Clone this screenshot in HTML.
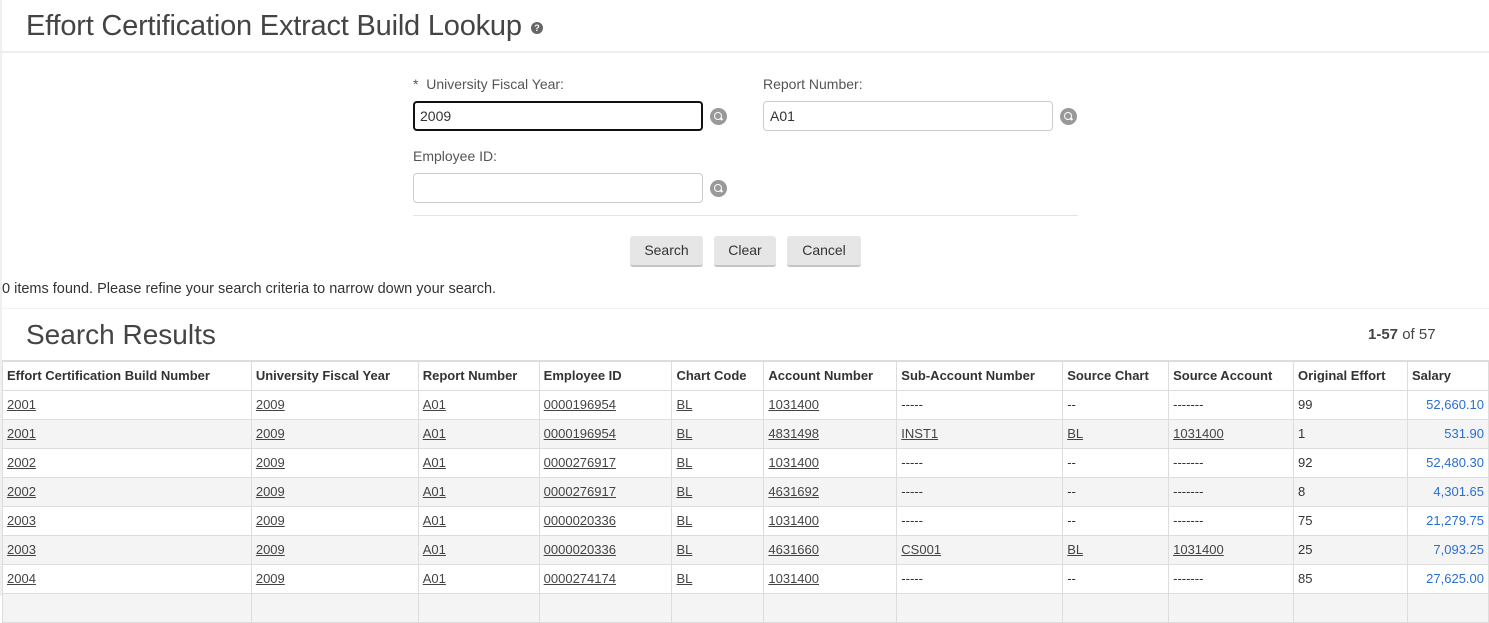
<!DOCTYPE html>
<html><head><meta charset="utf-8"><style>
*{box-sizing:border-box;margin:0;padding:0}
body{width:1489px;height:596px;overflow:hidden;background:#fff;font-family:"Liberation Sans",sans-serif;color:#333;position:relative}
.a{position:absolute}
h1{position:absolute;left:26px;top:10px;font-size:29px;font-weight:300;color:#444;letter-spacing:-0.2px}
.help{position:absolute;left:531px;top:22px;width:12px;height:12px;border-radius:50%;background:#666;color:#fff;font-size:9px;font-weight:bold;text-align:center;line-height:12px}
.lbl{position:absolute;font-size:14px;color:#555}
.inp{position:absolute;height:30px;width:290px;border:1px solid #ccc;border-radius:4px;font-size:14px;padding:6px 6px;color:#333}
.mag{position:absolute;width:17px;height:17px;border-radius:50%;background:#999}
.mag:after{content:"";position:absolute;left:4px;top:4px;width:6px;height:6px;border:1.5px solid #fff;border-radius:50%}
.mag:before{content:"";position:absolute;left:10px;top:10px;width:3px;height:1.5px;background:#fff;transform:rotate(45deg)}
.btn{position:absolute;top:236px;height:31px;background:#e6e6e6;border-radius:3px;border-bottom:2px solid #c4c4c4;font-size:14px;color:#333;text-align:center;line-height:29px}
table{position:absolute;left:2px;top:360px;border-collapse:collapse;table-layout:fixed;font-size:13px}
td,th{border:1px solid #ddd;height:29px;padding:0 4px;text-align:left;white-space:nowrap;overflow:hidden}
th{font-weight:bold;color:#333;border-top:2px solid #ddd}
tr:nth-child(odd) td{background:#f4f4f4}
td a{color:#444;text-decoration:underline}
td.s{color:#2a6ed1;text-align:right}
</style></head><body>
<div class="a" style="left:0;top:0;width:2px;height:596px;background:#f0f0f0"></div>
<h1>Effort Certification Extract Build Lookup</h1>
<div class="help">?</div>
<div class="a" style="left:2px;top:51px;width:1487px;height:2px;background:#eee"></div>
<div class="lbl" style="left:413px;top:76px">*&nbsp; University Fiscal Year:</div>
<div class="inp" style="left:413px;top:101px;border:2px solid #111;padding:5px 5px">2009</div>
<div class="mag" style="left:710px;top:108px"></div>
<div class="lbl" style="left:763px;top:76px">Report Number:</div>
<div class="inp" style="left:763px;top:101px">A01</div>
<div class="mag" style="left:1060px;top:108px"></div>
<div class="lbl" style="left:413px;top:148px">Employee ID:</div>
<div class="inp" style="left:413px;top:173px"></div>
<div class="mag" style="left:710px;top:180px"></div>
<div class="a" style="left:413px;top:215px;width:665px;height:1px;background:#e4e4e4"></div>
<div class="btn" style="left:630px;width:73px">Search</div>
<div class="btn" style="left:714px;width:62px">Clear</div>
<div class="btn" style="left:787px;width:74px">Cancel</div>
<div class="a" style="left:2px;top:281px;font-size:14.5px;color:#333">0 items found. Please refine your search criteria to narrow down your search.</div>
<div class="a" style="left:2px;top:308px;width:1487px;height:1px;background:#f2f2f2"></div>
<div class="a" style="left:26px;top:319px;font-size:28px;font-weight:300;color:#444">Search Results</div>
<div class="a" style="left:1368px;top:326px;font-size:15px;color:#444"><b>1-57</b> of 57</div>
<table>
<colgroup><col style="width:249px"><col style="width:167px"><col style="width:121px"><col style="width:133px"><col style="width:92px"><col style="width:133px"><col style="width:166px"><col style="width:106px"><col style="width:125px"><col style="width:114px"><col style="width:81px"></colgroup>
<tr><th>Effort Certification Build Number</th><th>University Fiscal Year</th><th>Report Number</th><th>Employee ID</th><th>Chart Code</th><th>Account Number</th><th>Sub-Account Number</th><th>Source Chart</th><th>Source Account</th><th>Original Effort</th><th>Salary</th></tr>
<tr><td><a>2001</a></td><td><a>2009</a></td><td><a>A01</a></td><td><a>0000196954</a></td><td><a>BL</a></td><td><a>1031400</a></td><td>-----</td><td>--</td><td>-------</td><td>99</td><td class="s">52,660.10</td></tr>
<tr><td><a>2001</a></td><td><a>2009</a></td><td><a>A01</a></td><td><a>0000196954</a></td><td><a>BL</a></td><td><a>4831498</a></td><td><a>INST1</a></td><td><a>BL</a></td><td><a>1031400</a></td><td>1</td><td class="s">531.90</td></tr>
<tr><td><a>2002</a></td><td><a>2009</a></td><td><a>A01</a></td><td><a>0000276917</a></td><td><a>BL</a></td><td><a>1031400</a></td><td>-----</td><td>--</td><td>-------</td><td>92</td><td class="s">52,480.30</td></tr>
<tr><td><a>2002</a></td><td><a>2009</a></td><td><a>A01</a></td><td><a>0000276917</a></td><td><a>BL</a></td><td><a>4631692</a></td><td>-----</td><td>--</td><td>-------</td><td>8</td><td class="s">4,301.65</td></tr>
<tr><td><a>2003</a></td><td><a>2009</a></td><td><a>A01</a></td><td><a>0000020336</a></td><td><a>BL</a></td><td><a>1031400</a></td><td>-----</td><td>--</td><td>-------</td><td>75</td><td class="s">21,279.75</td></tr>
<tr><td><a>2003</a></td><td><a>2009</a></td><td><a>A01</a></td><td><a>0000020336</a></td><td><a>BL</a></td><td><a>4631660</a></td><td><a>CS001</a></td><td><a>BL</a></td><td><a>1031400</a></td><td>25</td><td class="s">7,093.25</td></tr>
<tr><td><a>2004</a></td><td><a>2009</a></td><td><a>A01</a></td><td><a>0000274174</a></td><td><a>BL</a></td><td><a>1031400</a></td><td>-----</td><td>--</td><td>-------</td><td>85</td><td class="s">27,625.00</td></tr>
<tr><td></td><td></td><td></td><td></td><td></td><td></td><td></td><td></td><td></td><td></td><td></td></tr>
</table>
</body></html>
